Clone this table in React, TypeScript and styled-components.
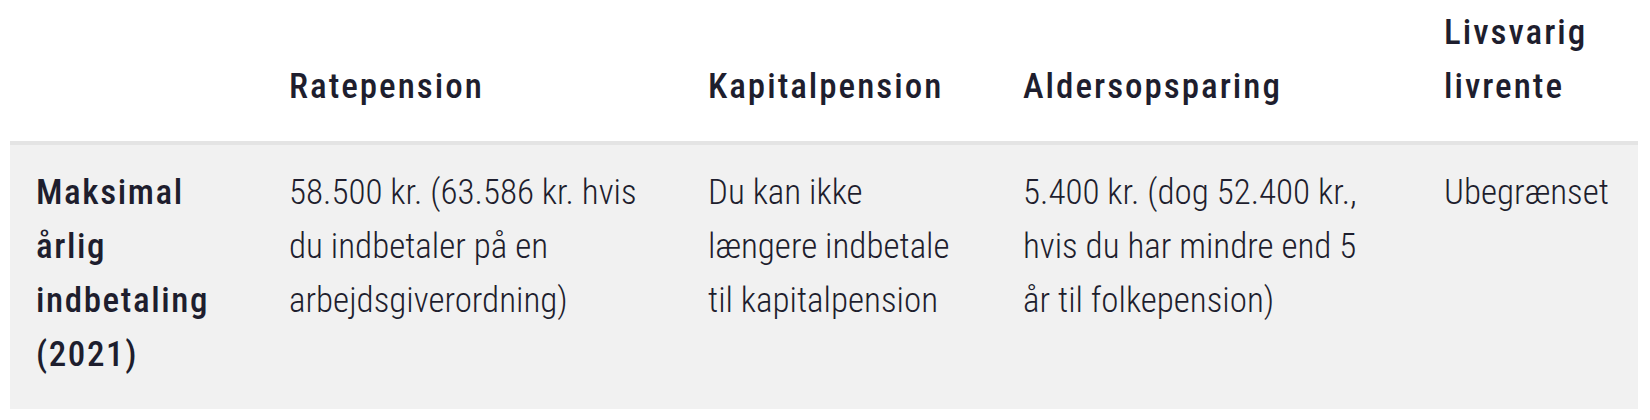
import React from "react";
import styled, { createGlobalStyle } from "styled-components";

const GlobalStyle = createGlobalStyle`
  html, body {
    margin: 0;
    padding: 0;
    background: #ffffff;
  }
  body {
    font-family: "Roboto Condensed", "Liberation Sans Narrow", "Liberation Sans", sans-serif;
    color: #1e1e2e;
  }
`;

const Page = styled.div`
  padding: 0 12px 0 10px;
`;

const Table = styled.table`
  width: 1628px;
  border-collapse: collapse;
  table-layout: fixed;
  font-size: 35px;
  line-height: 54px;
`;

const Col = styled.col<{ $w: number }>`
  width: ${(p) => p.$w}px;
`;

const HeadCell = styled.th`
  text-align: left;
  vertical-align: bottom;
  font-weight: 500;
  letter-spacing: 2px;
  padding: 6px 20px 27px 26px;
`;

const HeadRow = styled.tr`
  border-bottom: 4px solid #e4e4e4;
`;

const BodyRow = styled.tr`
  background: #f1f1f1;
`;

const RowHead = styled.th`
  text-align: left;
  vertical-align: top;
  font-weight: 500;
  letter-spacing: 1.6px;
  padding: 21px 20px 27px 26px;
`;

const Cell = styled.td<{ $padRight: number }>`
  vertical-align: top;
  font-weight: 300;
  padding: 21px ${(p) => p.$padRight}px 27px 26px;
`;

const columns = [253, 419, 315, 421, 220];

const headers = ["", "Ratepension", "Kapitalpension", "Aldersopsparing", "Livsvarig livrente"];

const values = [
  { text: "58.500 kr. (63.586 kr. hvis du indbetaler på en arbejdsgiverordning)", pr: 20 },
  { text: "Du kan ikke længere indbetale til kapitalpension", pr: 20 },
  { text: "5.400 kr. (dog 52.400 kr., hvis du har mindre end 5 år til folkepension)", pr: 55 },
  { text: "Ubegrænset", pr: 20 },
];

export default function App() {
  return (
    <>
      <GlobalStyle />
      <Page>
        <Table>
          <colgroup>
            {columns.map((w, i) => (
              <Col key={i} $w={w} />
            ))}
          </colgroup>
          <thead>
            <HeadRow>
              {headers.map((h, i) => (
                <HeadCell key={i}>{h}</HeadCell>
              ))}
            </HeadRow>
          </thead>
          <tbody>
            <BodyRow>
              <RowHead>Maksimal årlig indbetaling (2021)</RowHead>
              {values.map((v, i) => (
                <Cell key={i} $padRight={v.pr}>
                  {v.text}
                </Cell>
              ))}
            </BodyRow>
          </tbody>
        </Table>
      </Page>
    </>
  );
}
